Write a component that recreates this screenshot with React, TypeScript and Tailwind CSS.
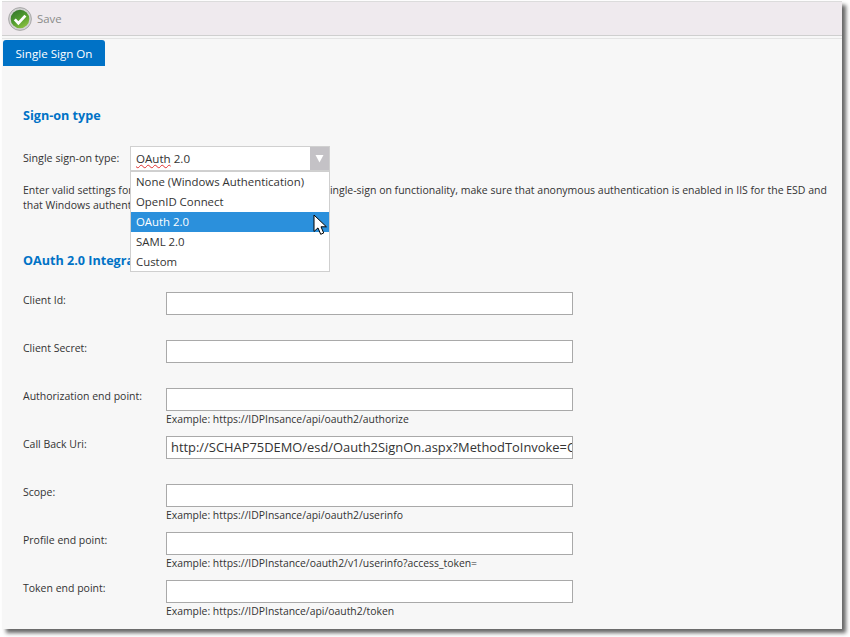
import React from "react";

function SaveIcon() {
  return (
    <svg width="24" height="24" viewBox="0 0 24 24" className="shrink-0">
      <defs>
        <linearGradient id="g" x1="0" y1="0" x2="0.6" y2="1">
          <stop offset="0" stopColor="#2f6f2c" />
          <stop offset="0.55" stopColor="#4e9a2e" />
          <stop offset="1" stopColor="#86bd3f" />
        </linearGradient>
      </defs>
      <circle cx="12" cy="12" r="11.4" fill="#d2d2d2" stroke="#9a9a9a" strokeWidth="0.8" />
      <circle cx="12" cy="12" r="9.3" fill="url(#g)" />
      <path d="M6.8 12.4l3.6 3.8 7-7.6" fill="none" stroke="#fff" strokeWidth="2.8" />
    </svg>
  );
}

function Cursor() {
  return (
    <svg width="16" height="23" viewBox="0 0 16 23" className="absolute left-[313px] top-[214px]">
      <path
        d="M1 1v16.5l4-3.6 2.7 6.4 3-1.3-2.7-6.2h5.4z"
        fill="#fff"
        stroke="#000"
        strokeWidth="1"
      />
    </svg>
  );
}

function Row({ label, hint, value }: { label: string; hint?: string; value?: string }) {
  return (
    <div className="flex h-[48px] items-start">
      <label className="w-[143px] pt-px text-[10.5px] leading-[15px] text-[#333]">{label}</label>
      <div className="w-[407px]">
        <div className="flex h-[23px] items-center overflow-hidden whitespace-nowrap border border-[#a9a9a9] bg-white px-[4px] text-[12.9px] text-[#333]">
          {value}
        </div>
        {hint && <div className="mt-[1px] text-[10.4px] leading-[15px] text-[#333]">{hint}</div>}
      </div>
    </div>
  );
}

const options = ["None (Windows Authentication)", "OpenID Connect", "OAuth 2.0", "SAML 2.0", "Custom"];

export default function App() {
  return (
    <div
      className="relative h-[637px] w-[850px] overflow-hidden bg-white pl-[2px] pt-[1px]"
      style={{ fontFamily: '"Open Sans", "Noto Sans", sans-serif' }}
    >
      <div className="h-[628px] w-[840px] overflow-hidden border-t border-[#dcdcdc] bg-[#f7f7f7] shadow-[4px_4px_4px_rgba(0,0,0,0.6)]">
        <div className="flex h-[34px] items-center gap-[5px] border-b border-[#cfcfcf] bg-[#efeaee] pl-[6px]">
          <SaveIcon />
          <span className="text-[11.4px] text-[#8a8a8a]">Save</span>
        </div>
        <div className="mt-[2px] h-px bg-[#e4e4e4]" />
        <div className="px-px pt-[1px]">
          <div className="flex h-[26px] w-[102px] items-center justify-center rounded-t-[3px] bg-[#0072c6] pt-px text-[11.6px] text-white">
            Single Sign On
          </div>
        </div>
        <div className="pl-[21px] pr-[12px]">
          <h2 className="mt-[41px] text-[12.6px] font-bold leading-[18px] text-[#0072c6]">Sign-on type</h2>
          <div className="mt-[21px] flex items-center">
            <label className="w-[107px] text-[10.7px] leading-[15px] text-[#333]">Single sign-on type:</label>
            <div className="flex h-[25px] w-[200px] items-center justify-between border border-[#d0d0d0] bg-white pl-[5px] text-[11.6px] text-[#333]">
              <span>
                <span className="underline decoration-wavy decoration-[#e03030] decoration-1">OAuth</span> 2.0
              </span>
              <span className="flex h-full w-[19px] items-center justify-center bg-[#c4c2c6]">
                <svg width="9" height="9" viewBox="0 0 9 9">
                  <path d="M0.5 1h8L4.5 8.5z" fill="#fff" />
                </svg>
              </span>
            </div>
          </div>
          <p className="mt-[12px] w-[810px] text-[10.5px] leading-[15px] text-[#333]">
            Enter valid settings for the fields below. To use the integrated single-sign on functionality, make sure that anonymous authentication is enabled in IIS for the ESD and that Windows authentication is disabled.
          </p>
          <h2 className="mt-[39px] text-[12.6px] font-bold leading-[18px] text-[#0072c6]">OAuth 2.0 Integration</h2>
          <div className="mt-[22px]">
            <Row label="Client Id:" />
            <Row label="Client Secret:" />
            <Row label="Authorization end point:" hint="Example: https://IDPInsance/api/oauth2/authorize" />
            <Row label="Call Back Uri:" value="http://SCHAP75DEMO/esd/Oauth2SignOn.aspx?MethodToInvoke=CallBack" />
            <Row label="Scope:" hint="Example: https://IDPInsance/api/oauth2/userinfo" />
            <Row label="Profile end point:" hint="Example: https://IDPInstance/oauth2/v1/userinfo?access_token=" />
            <Row label="Token end point:" hint="Example: https://IDPInstance/api/oauth2/token" />
          </div>
        </div>
      </div>

      <div className="absolute left-[130px] top-[171px] h-[101px] w-[200px] border border-[#cfcfcf] bg-white text-[11.4px] text-[#333]">
        {options.map((o) => (
          <div
            key={o}
            className={`flex h-[20px] items-center pl-[5px] ${o === "OAuth 2.0" ? "bg-[#2b90dc] text-white" : ""}`}
          >
            {o}
          </div>
        ))}
      </div>
      <Cursor />
    </div>
  );
}
